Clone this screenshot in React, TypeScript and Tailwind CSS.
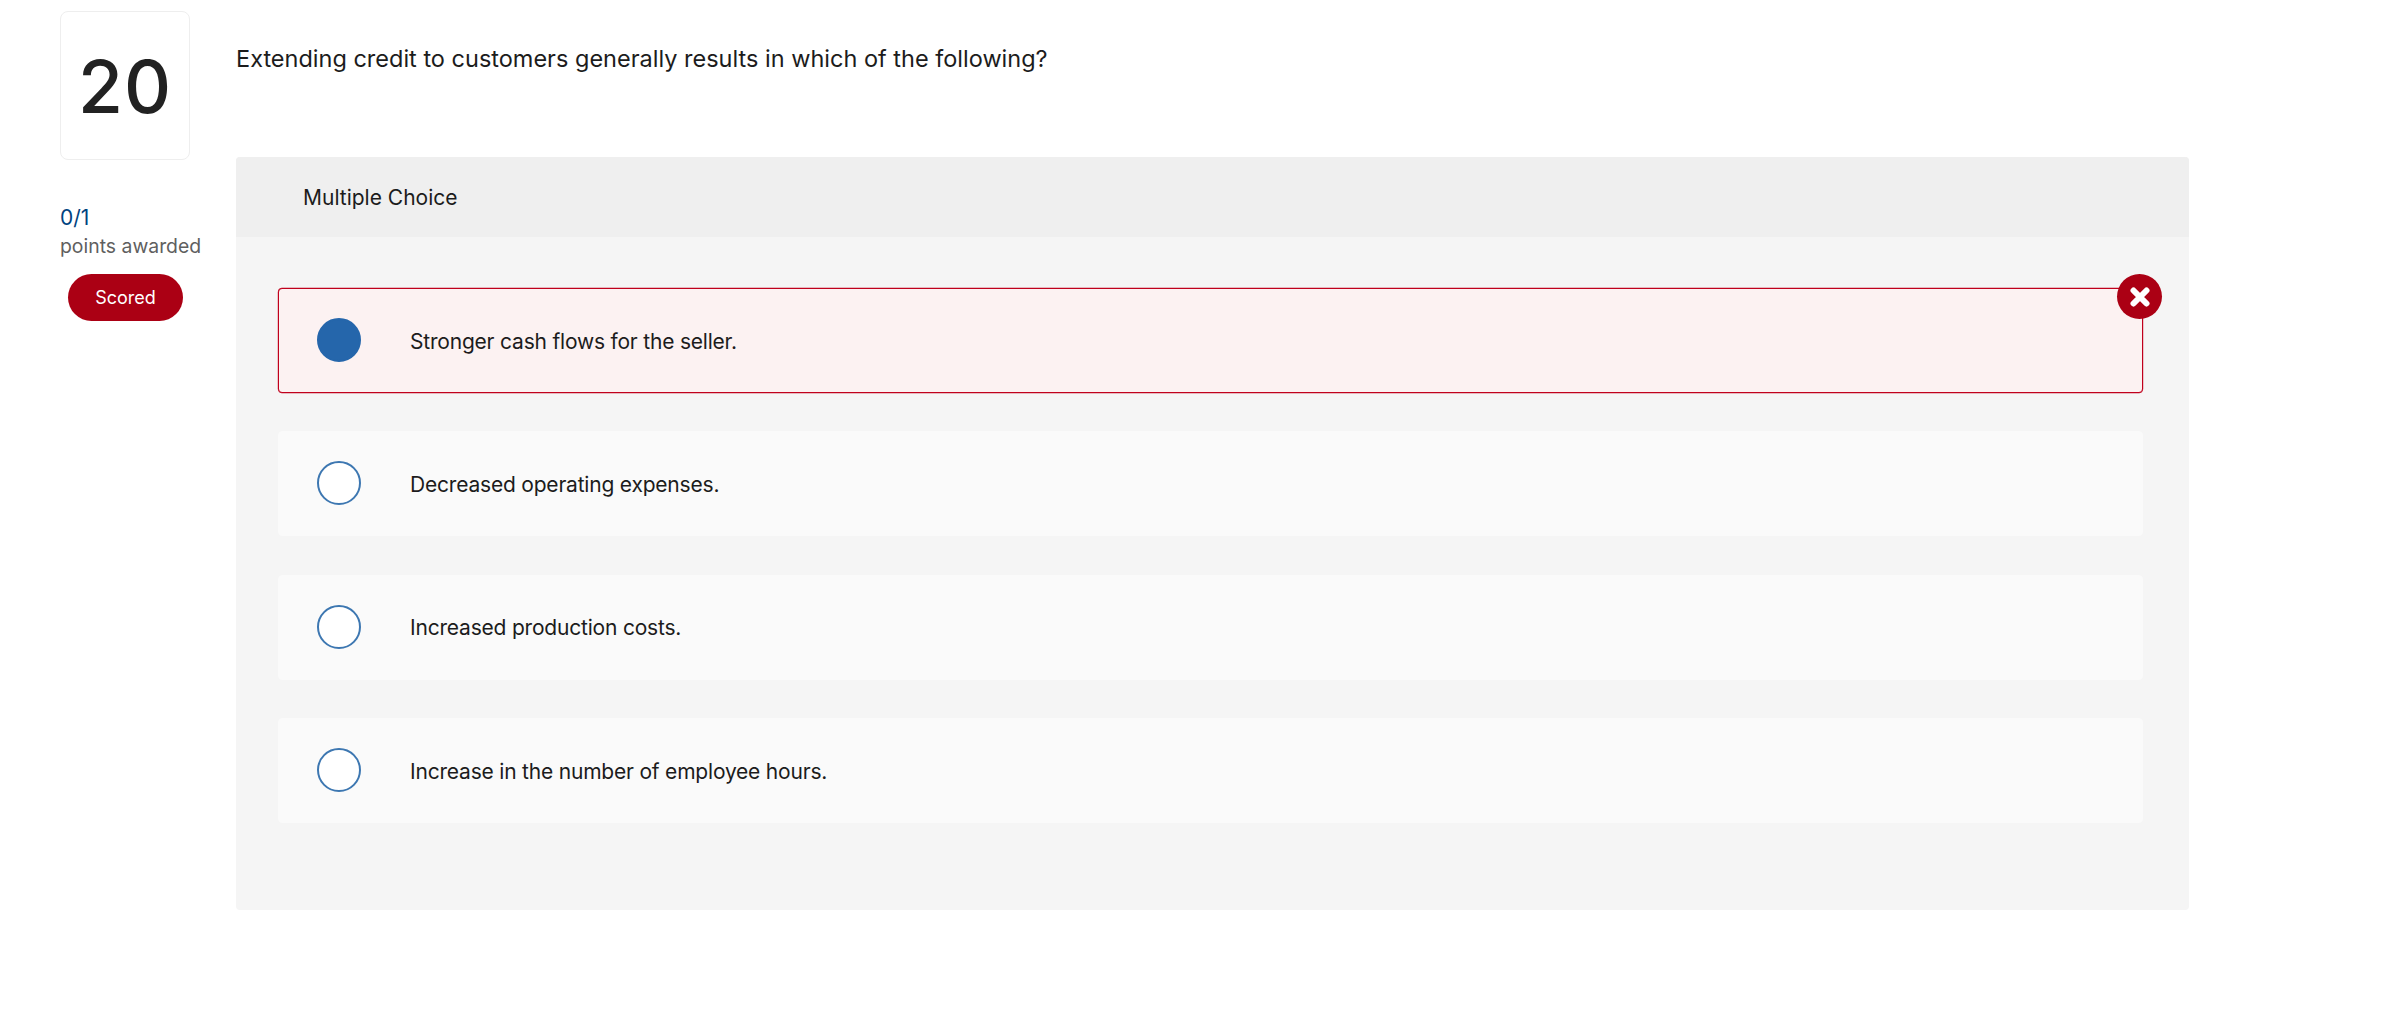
const answers = [
  { text: "Stronger cash flows for the seller.", selected: true },
  { text: "Decreased operating expenses.", selected: false },
  { text: "Increased production costs.", selected: false },
  { text: "Increase in the number of employee hours.", selected: false },
];

function WrongMark() {
  return (
    <div className="absolute -top-[15px] -right-[20px] flex h-[45px] w-[45px] items-center justify-center rounded-full bg-[#ab0014]">
      <svg width="20" height="20" viewBox="0 0 20 20" fill="none">
        <path d="M3.5 3.5L16.5 16.5M16.5 3.5L3.5 16.5" stroke="#ffffff" strokeWidth="6" strokeLinecap="round" />
      </svg>
    </div>
  );
}

function AnswerRow({ text, selected }: { text: string; selected: boolean }) {
  return (
    <div
      className={
        selected
          ? "relative flex h-[105px] items-center rounded-[4px] border border-[#c0001c] bg-[#fcf2f2] pl-[38px] shadow-[0_0_0_0.2px_#c0001c]"
          : "relative flex h-[105px] items-center rounded-[4px] border border-[#fafafa] bg-[#fafafa] pl-[38px]"
      }
    >
      <div
        className={
          selected
            ? "-mt-[1px] h-[44px] w-[44px] rounded-full border-2 border-[#2566ab] bg-[#2566ab]"
            : "-mt-[1px] h-[44px] w-[44px] rounded-full border-2 border-[#3d77b1] bg-white"
        }
      />
      <span className="ml-[49px] mt-[2px] text-[21px] tracking-[-0.2px] text-[#1c1c1c]">{text}</span>
      {selected && <WrongMark />}
    </div>
  );
}

export default function App() {
  return (
    <div className="flex h-[1032px] bg-white pl-[60px] pt-[11px] font-['Inter',sans-serif]">
      {/* left column */}
      <div className="w-[176px] shrink-0">
        <div className="flex h-[149px] w-[130px] items-center justify-center rounded-[8px] border border-[#eeeeee] pt-[2px] text-[73px] font-medium leading-none tracking-[1px] text-[#222222]">
          20
        </div>
        <div className="mt-[43px] text-[21px] leading-[30px] text-[#00437f]">0/1</div>
        <div className="text-[19.4px] leading-[26px] text-[#5f5f5f]">points awarded</div>
        <div className="mt-[15px] ml-[8px] flex h-[47px] w-[115px] items-center justify-center rounded-full bg-[#ab0014] text-[18px] text-white">
          Scored
        </div>
      </div>

      {/* question */}
      <div className="w-[1953px]">
        <div className="flex h-[146px] items-start pt-[30px] text-[23.5px] leading-[36px] text-[#1c1c1c]">
          Extending credit to customers generally results in which of the following?
        </div>
        <div className="h-[753px] rounded-[4px] bg-[#f5f5f5]">
          <div className="flex h-[80px] items-center rounded-t-[4px] bg-[#efefef] pl-[67px] pt-[1px] text-[21px] text-[#1c1c1c]">
            Multiple Choice
          </div>
          <div className="flex flex-col gap-[38.3px] pl-[42px] pr-[46px] pt-[51px]">
            {answers.map((a) => (
              <AnswerRow key={a.text} text={a.text} selected={a.selected} />
            ))}
          </div>
        </div>
      </div>
    </div>
  );
}
